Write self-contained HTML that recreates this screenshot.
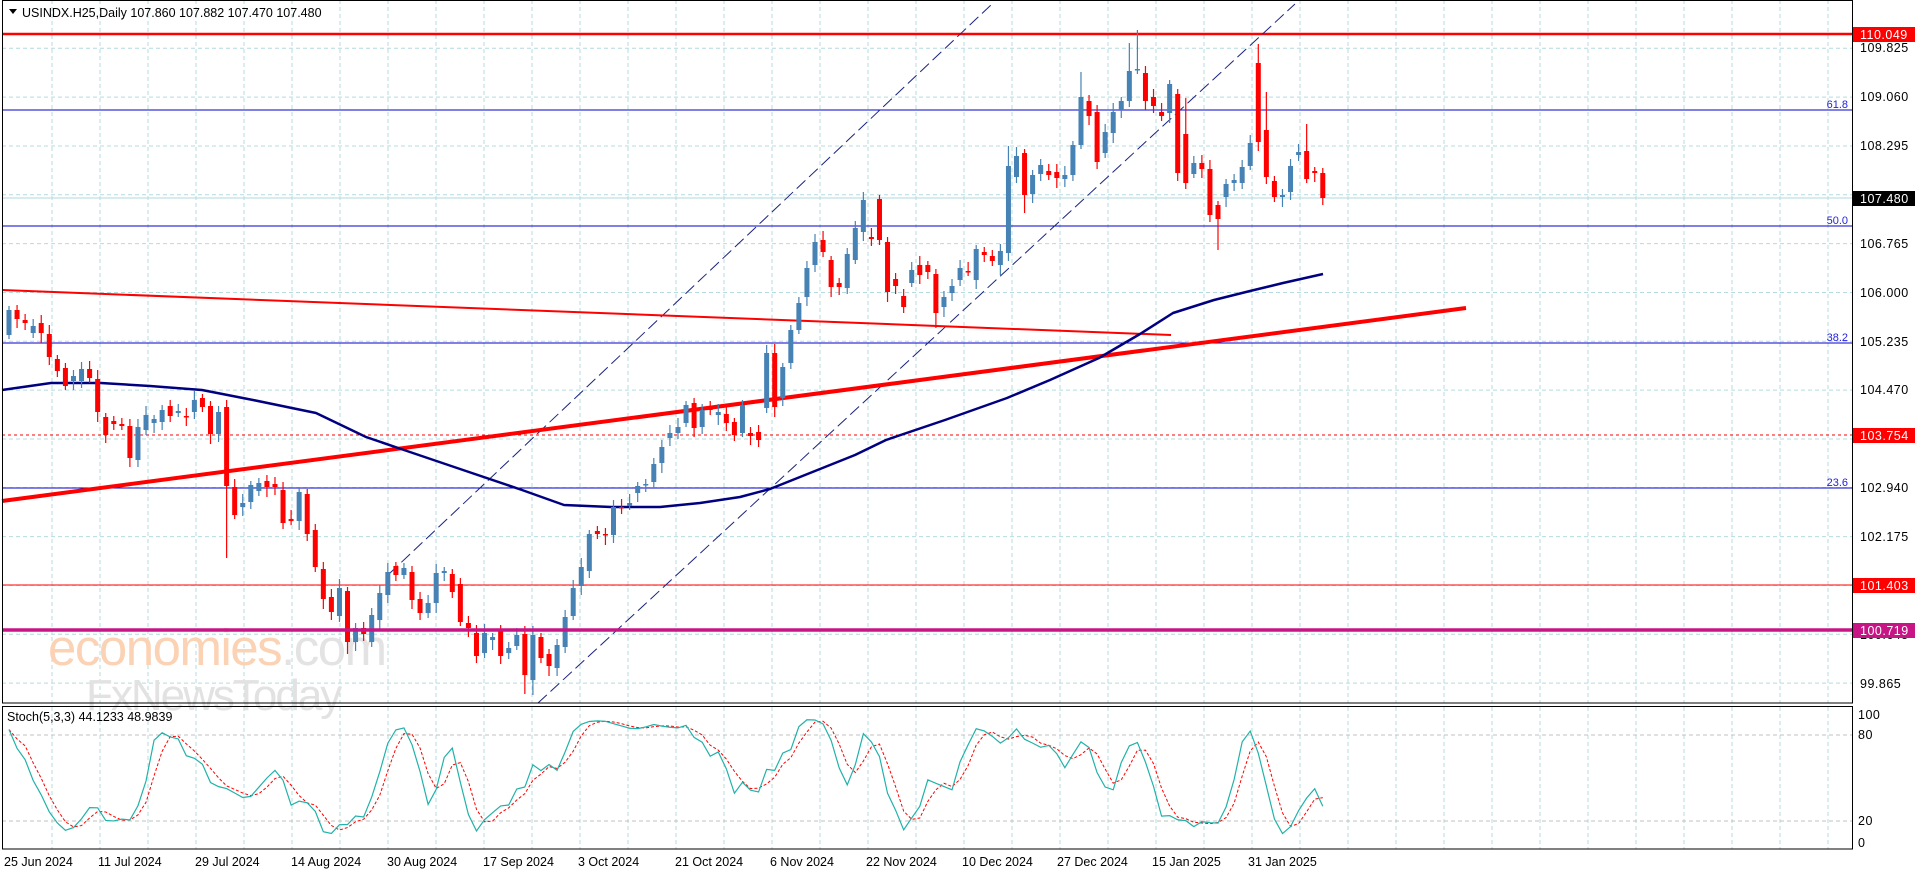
<!DOCTYPE html>
<html><head><meta charset="utf-8"><style>
html,body{margin:0;padding:0;background:#fff;width:1916px;height:874px;overflow:hidden}
svg{display:block;font-family:"Liberation Sans",sans-serif}
</style></head><body>
<svg id="s" width="1916" height="874" xmlns="http://www.w3.org/2000/svg">
<rect width="1916" height="874" fill="#fff"/>
<g id="grid"></g>
<!-- watermark -->
<text x="48" y="665" font-size="51" fill="#fbd3b4" letter-spacing="-1.5">economies<tspan fill="#e3e3e3">.com</tspan></text>
<text x="86" y="710" font-size="44" fill="#e2e2e2" letter-spacing="-2">FxNewsToday</text>
<!-- levels -->
<line x1="2" y1="34" x2="1852" y2="34" stroke="#ff0000" stroke-width="2.5"/>
<line x1="2" y1="110" x2="1852" y2="110" stroke="#0000cc" stroke-width="1"/>
<line x1="2" y1="226" x2="1852" y2="226" stroke="#0000cc" stroke-width="1"/>
<line x1="2" y1="343" x2="1852" y2="343" stroke="#0000cc" stroke-width="1"/>
<line x1="2" y1="488" x2="1852" y2="488" stroke="#0000cc" stroke-width="1"/>
<line x1="2" y1="435" x2="1852" y2="435" stroke="#ff0000" stroke-width="1" stroke-dasharray="3,3"/>
<line x1="2" y1="585" x2="1852" y2="585" stroke="#ff0000" stroke-width="1"/>
<line x1="2" y1="198" x2="1852" y2="198" stroke="#b0d8e0" stroke-width="1"/>
<g font-size="11" fill="#2222dd" text-anchor="end">
<text x="1848" y="108">61.8</text><text x="1848" y="224">50.0</text><text x="1848" y="341">38.2</text><text x="1848" y="486">23.6</text>
</g>
<!-- channel -->
<line x1="538" y1="703" x2="1295" y2="4" stroke="#1a237e" stroke-width="1" stroke-dasharray="12,5"/>
<line x1="389" y1="574" x2="992" y2="4" stroke="#1a237e" stroke-width="1" stroke-dasharray="12,5"/>
<!-- trendlines -->
<line x1="2" y1="290" x2="1171" y2="335" stroke="#ff0000" stroke-width="2"/>
<line x1="2" y1="501" x2="1466" y2="308" stroke="#ff0000" stroke-width="4"/>
<!-- MA -->
<polyline fill="none" stroke="#000080" stroke-width="2.5" stroke-linejoin="round" points="2,390 51,383 101,383 150,386 202,390 253,400 316,413 366,437 404,450 463,470 522,490 564,505 611,507 660,507 700,503 740,497 770,489 820,469 855,455 886,440 945,420 1007,398 1050,380 1099,358 1140,334 1173,313 1214,300 1250,291 1283,283 1323,274"/>
<g id="candles"></g>
<g id="stoch"></g>
<line x1="2" y1="630" x2="1852" y2="630" stroke="#c71585" stroke-width="3.5"/>
<!-- frames -->
<rect x="2.5" y="0.5" width="1850" height="702.5" fill="none" stroke="#000" stroke-width="1"/>
<rect x="2.5" y="706.5" width="1850" height="142.5" fill="none" stroke="#000" stroke-width="1"/>
<!-- header -->
<path d="M9 9 L17 9 L13 14 Z" fill="#000"/>
<text x="22" y="17" font-size="12.5" fill="#000">USINDX.H25,Daily  107.860 107.882 107.470 107.480</text>
<text x="7" y="721" font-size="12.5" fill="#000">Stoch(5,3,3) 44.1233 48.9839</text>
<!-- axis labels -->
<g font-size="12.5" fill="#000" letter-spacing="0.5">
<text x="1860" y="52">109.825</text><text x="1860" y="101">109.060</text><text x="1860" y="150">108.295</text>
<text x="1860" y="248">106.765</text><text x="1860" y="297">106.000</text><text x="1860" y="346">105.235</text>
<text x="1860" y="394">104.470</text><text x="1860" y="492">102.940</text><text x="1860" y="541">102.175</text>
<text x="1860" y="639">100.645</text><text x="1860" y="688">99.865</text>
<text x="1858" y="719">100</text><text x="1858" y="739">80</text><text x="1858" y="825">20</text><text x="1858" y="847">0</text>
</g>
<g font-size="12.5" letter-spacing="0.5">
<rect x="1853" y="27" width="62" height="15" fill="#ff0000"/><text x="1860" y="39" fill="#fff">110.049</text>
<rect x="1853" y="191" width="62" height="15" fill="#000"/><text x="1860" y="203" fill="#fff">107.480</text>
<rect x="1853" y="428" width="62" height="15" fill="#ff0000"/><text x="1860" y="440" fill="#fff">103.754</text>
<rect x="1853" y="578" width="62" height="15" fill="#ff0000"/><text x="1860" y="590" fill="#fff">101.403</text>
<rect x="1853" y="623" width="62" height="15" fill="#c71585"/><text x="1860" y="635" fill="#fff">100.719</text>
</g>
<g font-size="12.5" fill="#000" id="dates">
<text x="4" y="866">25 Jun 2024</text><text x="98" y="866">11 Jul 2024</text><text x="195" y="866">29 Jul 2024</text>
<text x="291" y="866">14 Aug 2024</text><text x="387" y="866">30 Aug 2024</text><text x="483" y="866">17 Sep 2024</text>
<text x="578" y="866">3 Oct 2024</text><text x="675" y="866">21 Oct 2024</text><text x="770" y="866">6 Nov 2024</text>
<text x="866" y="866">22 Nov 2024</text><text x="962" y="866">10 Dec 2024</text><text x="1057" y="866">27 Dec 2024</text>
<text x="1152" y="866">15 Jan 2025</text><text x="1248" y="866">31 Jan 2025</text>
</g>
</svg>
<script>
var NS="http://www.w3.org/2000/svg";
function el(p,t,a){var e=document.createElementNS(NS,t);for(var k in a)e.setAttribute(k,a[k]);p.appendChild(e);return e;}
var g=document.getElementById('grid');
for(var x=52;x<1852;x+=48){el(g,'line',{x1:x,y1:0,x2:x,y2:703,stroke:'#b4dce0','stroke-dasharray':'4,3'});el(g,'line',{x1:x,y1:707,x2:x,y2:849,stroke:'#b4dce0','stroke-dasharray':'4,3'});}
for(var y=48.3;y<703;y+=48.83){el(g,'line',{x1:2,y1:y,x2:1852,y2:y,stroke:'#b4dce0','stroke-dasharray':'4,3'});}
el(g,'line',{x1:2,y1:735,x2:1852,y2:735,stroke:'#c0c0c0','stroke-dasharray':'4,3'});
el(g,'line',{x1:2,y1:821,x2:1852,y2:821,stroke:'#c0c0c0','stroke-dasharray':'4,3'});
var B=[[335,310],[310,319],[320,323],[333,326],[323,333],[334,357],[359,371],[368,386],[381,376],[381,369],[369,378],[379,412],[417,435],[421,424],[424,426],[426,458],[460,427],[430,415],[423,419],[422,410],[406,416],[413,411],[416,417],[412,400],[398,407],[406,434],[434,412],[407,486],[487,515],[507,503],[502,485],[491,483],[481,487],[484,487],[490,523],[519,521],[521,492],[494,534],[530,567],[569,599],[597,612],[616,588],[591,642],[642,628],[628,634],[642,615],[620,593],[595,572],[566,575],[575,568],[572,600],[599,613],[613,603],[603,573],[573,571],[574,592],[584,622],[623,628],[633,656],[653,633],[640,637],[630,656],[653,648],[646,635],[634,675],[680,635],[637,658],[654,666],[668,645],[647,617],[616,588],[586,567],[571,534],[531,534],[534,535],[535,507],[507,508],[506,503],[493,486],[485,484],[482,464],[463,447],
[438,433],[433,427],[423,405],[403,428],[427,410],[408,410],[415,412],[414,423],[422,435],[433,405],[433,436],[432,440],[408,353],[353,407],[398,367],[363,330],[330,303],[297,268],[265,242],[240,252],[260,287],[283,287],[288,254],[260,228],[232,200],[237,239],[199,240],[242,292],[279,286],[296,307],[283,270],[265,275],[265,272],[274,313],[307,297],[293,286],[280,268],[271,272],[280,249],[252,255],[256,261],[265,251],[253,166],[177,156],[153,195],[194,175],[174,165],[171,175],[172,178],[179,175],[175,145],[145,97],[101,116],[112,162],[153,132],[133,112],[110,101],[101,71],[70,69],[73,101],[97,106],[112,116],[113,84],[94,173],[134,183],[174,163],[163,169],[169,215],[205,219],[197,184],[183,180],[183,167],[166,143],[63,142],[130,177],[181,197],[197,195],[192,166],[155,152],[151,179],[171,173],[173,198]];
var ext={27:[0,66],124:[12,0],133:[20,0],139:[23,0],140:[33,0],155:[10,0],150:[0,26],126:[0,14],115:[0,10],42:[0,8],64:[0,10],65:[0,8],146:[30,0],156:[34,0],161:[18,0]};
var c=document.getElementById('candles'),H=[],L=[],C=[];
for(var i=0;i<B.length;i++){var o=B[i][0],cl=B[i][1],x=9+i*8.06;var up=cl<o;var col=up?'#4682b4':'#ff0000';
var t=Math.min(o,cl),b=Math.max(o,cl);var e=ext[i]||[0,0];var hi=t-4-((i*7)%6)-e[0],lo=b+4+((i*5)%7)+e[1];
H.push(hi);L.push(lo);C.push(cl);
el(c,'line',{x1:x,y1:hi,x2:x,y2:lo,stroke:col,'stroke-width':1.2});
el(c,'rect',{x:x-2.5,y:t,width:5,height:Math.max(1.5,b-t),fill:col});}
var num=[],den=[];
for(i=0;i<C.length;i++){var s=Math.max(0,i-4),hh=1e9,ll=-1e9;for(var j=s;j<=i;j++){hh=Math.min(hh,H[j]);ll=Math.max(ll,L[j]);}num.push(ll-C[i]);den.push(ll-hh);}
var K=[],D=[];
for(i=0;i<C.length;i++){var a=0,d=0;for(j=Math.max(0,i-2);j<=i;j++){a+=num[j];d+=den[j];}K.push(d?100*a/d:50);}
for(i=0;i<C.length;i++){var a2=0,n=0;for(j=Math.max(0,i-2);j<=i;j++){a2+=K[j];n++;}D.push(a2/n);}
function sy(v){return 842-v*1.28;}
var pk='',pd='';for(i=0;i<C.length;i++){var x=9+i*8.06;pk+=x+','+sy(K[i])+' ';pd+=x+','+sy(D[i])+' ';}
var st=document.getElementById('stoch');
el(st,'polyline',{points:pd,fill:'none',stroke:'#ff0000','stroke-width':1,'stroke-dasharray':'3,2'});
el(st,'polyline',{points:pk,fill:'none',stroke:'#20b2aa','stroke-width':1.2});
</script>
</body></html>
